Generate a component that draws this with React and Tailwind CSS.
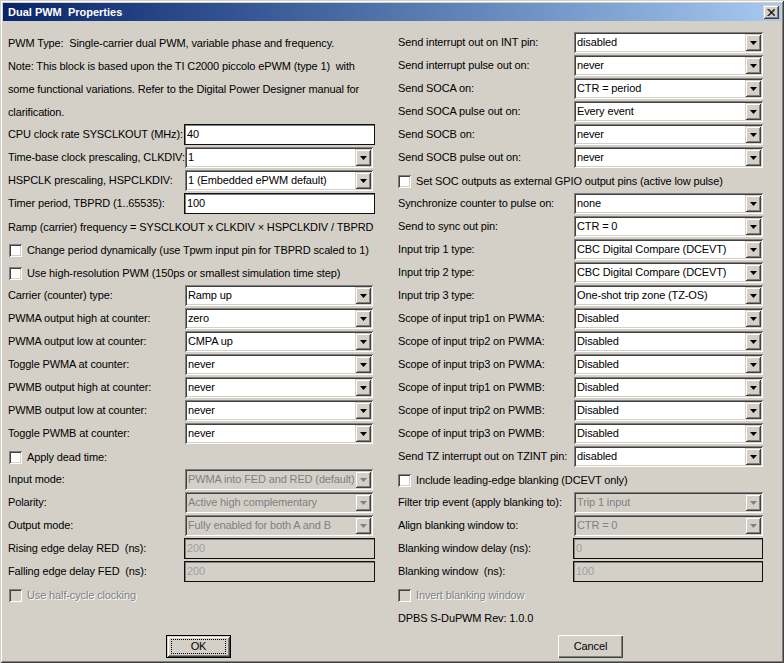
import React from "react";

const sunken =
  "shadow-[inset_1px_1px_#808080,inset_-1px_-1px_#ffffff,inset_2px_2px_#404040,inset_-2px_-2px_#d4d0c8]";
const raised =
  "shadow-[inset_1px_1px_#d4d0c8,inset_-1px_-1px_#404040,inset_2px_2px_#ffffff,inset_-2px_-2px_#808080]";
const etched = "text-[#808080] [text-shadow:1px_1px_#ffffff]";

function Arrow({ disabled }) {
  return (
    <svg width="7" height="4" viewBox="0 0 7 4">
      <polygon points="0,0 7,0 3.5,4" fill={disabled ? "#808080" : "#000"} />
    </svg>
  );
}

function Select({ value, disabled, w }) {
  return (
    <div
      className={`flex h-[21px] shrink-0 p-[2px] ${sunken} ${disabled ? "bg-[#d4d0c8] text-[#808080]" : "bg-white text-black"}`}
      style={{ width: w }}
    >
      <span className="flex-1 overflow-hidden whitespace-nowrap pl-[1px] leading-[17px]">{value}</span>
      <div className={`flex h-[17px] w-[16px] shrink-0 items-center justify-center bg-[#d4d0c8] ${raised}`}>
        <Arrow disabled={disabled} />
      </div>
    </div>
  );
}

function Input({ value, disabled, w }) {
  return (
    <div
      className={`h-[21px] shrink-0 border border-[#101010] pl-[2px] leading-[19px] shadow-[inset_1px_1px_#808080] ${disabled ? "bg-[#d4d0c8] text-[#a0a0a0]" : "bg-white text-black"}`}
      style={{ width: w }}
    >
      {value}
    </div>
  );
}

function Check({ label, disabled, ml }) {
  return (
    <div className="flex h-[23px] items-center">
      <div
        className={`h-[13px] w-[13px] shrink-0 ${disabled ? "bg-[#d4d0c8]" : "bg-white"} ${sunken}`}
        style={{ marginLeft: ml }}
      />
      <span className={`ml-[5px] whitespace-pre ${disabled ? etched : ""}`}>{label}</span>
    </div>
  );
}

function Row({ item, side }) {
  const left = side === "left";
  if (item.t === "text") {
    return <div className="h-[23px] whitespace-pre leading-[23px]">{item.label}</div>;
  }
  if (item.t === "check") {
    return <Check label={item.label} disabled={item.disabled} ml={left ? 1 : 0} />;
  }
  const isInput = item.t === "input";
  const labelW = isInput ? (left ? 176 : 175) : left ? 177 : 176;
  const ctrlW = isInput ? (left ? 191 : 190) : left ? 188 : 189;
  return (
    <div className="flex h-[23px] items-start">
      <span className="shrink-0 whitespace-pre leading-[21px]" style={{ width: labelW }}>
        {item.label}
      </span>
      {isInput ? (
        <Input value={item.value} disabled={item.disabled} w={ctrlW} />
      ) : (
        <Select value={item.value} disabled={item.disabled} w={ctrlW} />
      )}
    </div>
  );
}

const leftRows = [
  { t: "text", label: "PWM Type:  Single-carrier dual PWM, variable phase and frequency." },
  { t: "text", label: "Note: This block is based upon the TI C2000 piccolo ePWM (type 1)  with" },
  { t: "text", label: "some functional variations. Refer to the Digital Power Designer manual for" },
  { t: "text", label: "clarification." },
  { t: "input", label: "CPU clock rate SYSCLKOUT (MHz):", value: "40" },
  { t: "select", label: "Time-base clock prescaling, CLKDIV:", value: "1" },
  { t: "select", label: "HSPCLK prescaling, HSPCLKDIV:", value: "1 (Embedded ePWM default)" },
  { t: "input", label: "Timer period, TBPRD (1..65535):", value: "100" },
  { t: "text", label: "Ramp (carrier) frequency = SYSCLKOUT x CLKDIV × HSPCLKDIV / TBPRD" },
  { t: "check", label: "Change period dynamically (use Tpwm input pin for TBPRD scaled to 1)" },
  { t: "check", label: "Use high-resolution PWM (150ps or smallest simulation time step)" },
  { t: "select", label: "Carrier (counter) type:", value: "Ramp up" },
  { t: "select", label: "PWMA output high at counter:", value: "zero" },
  { t: "select", label: "PWMA output low at counter:", value: "CMPA up" },
  { t: "select", label: "Toggle PWMA at counter:", value: "never" },
  { t: "select", label: "PWMB output high at counter:", value: "never" },
  { t: "select", label: "PWMB output low at counter:", value: "never" },
  { t: "select", label: "Toggle PWMB at counter:", value: "never" },
  { t: "check", label: "Apply dead time:" },
  { t: "select", label: "Input mode:", value: "PWMA into FED and RED (default)", disabled: true },
  { t: "select", label: "Polarity:", value: "Active high complementary", disabled: true },
  { t: "select", label: "Output mode:", value: "Fully enabled for both A and B", disabled: true },
  { t: "input", label: "Rising edge delay RED  (ns):", value: "200", disabled: true },
  { t: "input", label: "Falling edge delay FED  (ns):", value: "200", disabled: true },
  { t: "check", label: "Use half-cycle clocking", disabled: true },
];

const rightRows = [
  { t: "select", label: "Send interrupt out on INT pin:", value: "disabled" },
  { t: "select", label: "Send interrupt pulse out on:", value: "never" },
  { t: "select", label: "Send SOCA on:", value: "CTR = period" },
  { t: "select", label: "Send SOCA pulse out on:", value: "Every event" },
  { t: "select", label: "Send SOCB on:", value: "never" },
  { t: "select", label: "Send SOCB pulse out on:", value: "never" },
  { t: "check", label: "Set SOC outputs as external GPIO output pins (active low pulse)" },
  { t: "select", label: "Synchronize counter to pulse on:", value: "none" },
  { t: "select", label: "Send to sync out pin:", value: "CTR = 0" },
  { t: "select", label: "Input trip 1 type:", value: "CBC Digital Compare (DCEVT)" },
  { t: "select", label: "Input trip 2 type:", value: "CBC Digital Compare (DCEVT)" },
  { t: "select", label: "Input trip 3 type:", value: "One-shot trip zone (TZ-OS)" },
  { t: "select", label: "Scope of input trip1 on PWMA:", value: "Disabled" },
  { t: "select", label: "Scope of input trip2 on PWMA:", value: "Disabled" },
  { t: "select", label: "Scope of input trip3 on PWMA:", value: "Disabled" },
  { t: "select", label: "Scope of input trip1 on PWMB:", value: "Disabled" },
  { t: "select", label: "Scope of input trip2 on PWMB:", value: "Disabled" },
  { t: "select", label: "Scope of input trip3 on PWMB:", value: "Disabled" },
  { t: "select", label: "Send TZ interrupt out on TZINT pin:", value: "disabled" },
  { t: "check", label: "Include leading-edge blanking (DCEVT only)" },
  { t: "select", label: "Filter trip event (apply blanking to):", value: "Trip 1 input", disabled: true },
  { t: "select", label: "Align blanking window to:", value: "CTR = 0", disabled: true },
  { t: "input", label: "Blanking window delay (ns):", value: "0", disabled: true },
  { t: "input", label: "Blanking window  (ns):", value: "100", disabled: true },
  { t: "check", label: "Invert blanking window", disabled: true },
  { t: "text", label: "DPBS S-DuPWM Rev: 1.0.0" },
];

export default function App() {
  return (
    <div className="relative h-[663px] w-[784px] overflow-hidden bg-[#d4d0c8] font-['Liberation_Sans',Arial,sans-serif] text-[11px] tracking-[-0.13px] text-black shadow-[inset_1px_1px_#d4d0c8,inset_-1px_-1px_#404040,inset_2px_2px_#ffffff,inset_-2px_-2px_#808080]">
      {/* title bar */}
      <div className="mx-[3px] mt-[3px] flex h-[18px] items-center justify-between bg-linear-to-r from-[#0a246a] to-[#a6caf0] pl-[5px] pr-[2px]">
        <span className="whitespace-pre text-[11px] font-bold tracking-normal text-white">Dual PWM  Properties</span>
        <div className={`flex h-[14px] w-[16px] items-center justify-center bg-[#d4d0c8] ${raised}`}>
          <svg width="8" height="7" viewBox="0 0 8 7">
            <path d="M0.5 0 L7.5 7 M1.5 0 L8.5 7 M7.5 0 L0.5 7 M8.5 0 L1.5 7" stroke="#000" strokeWidth="1" />
          </svg>
        </div>
      </div>

      <div className="flex pl-[8px] pt-[11px]">
        <div className="flex w-[367px] flex-col">
          {leftRows.map((item, i) => (
            <Row key={i} item={item} side="left" />
          ))}
        </div>
        <div className="ml-[23px] flex w-[365px] flex-col">
          {rightRows.map((item, i) => (
            <Row key={i} item={item} side="right" />
          ))}
        </div>
      </div>

      {/* buttons */}
      <div className="mt-[5px] flex">
        <div className="ml-[166px] h-[23px] w-[65px] border border-black bg-[#d4d0c8]">
          <div className={`flex h-full w-full items-center justify-center ${raised}`}>
            <div className="flex h-[15px] w-[55px] items-center justify-center border border-dotted border-black">
              OK
            </div>
          </div>
        </div>
        <div className="ml-[327px] flex h-[23px] w-[65px] items-center justify-center bg-[#d4d0c8] shadow-[inset_1px_1px_#ffffff,inset_-1px_-1px_#404040,inset_-2px_-2px_#808080]">
          Cancel
        </div>
      </div>
    </div>
  );
}
